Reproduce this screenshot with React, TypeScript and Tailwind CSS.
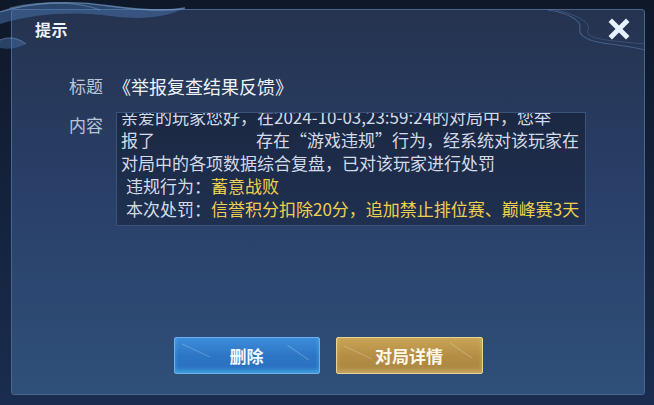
import { X } from 'lucide-react';

const cjk = { fontFamily: '"Noto Sans CJK SC", "Noto Sans", sans-serif' };

const Swirls = () => (
  <svg className="absolute left-0 top-0 pointer-events-none" width="654" height="70" viewBox="0 0 654 70" fill="none">
    <path d="M0 12 C30 2 70 0 110 6 C140 10 165 12 185 8 C165 18 140 20 110 16 C80 12 40 12 0 24 Z" fill="#4a76b0" fillOpacity="0.5" />
    <path d="M0 12 C30 2 70 0 110 6 C140 10 165 12 185 8" stroke="#86aee0" strokeOpacity="0.6" strokeWidth="1.3" />
    <path d="M10 8 C40 0 80 2 100 10" stroke="#8fb3df" strokeOpacity="0.4" strokeWidth="1" />
    <path d="M0 40 C10 36 18 38 26 44 C18 48 8 50 0 48 Z" fill="#4a76b0" fillOpacity="0.45" />
    <path d="M0 40 C10 36 18 38 26 44" stroke="#86aee0" strokeOpacity="0.5" strokeWidth="1" />
    <path d="M548 10 C565 12 582 20 580 28 C577 36 590 42 610 44 C625 46 638 48 645 50" stroke="#6f9bd0" strokeOpacity="0.4" strokeWidth="1.2" />
    <path d="M556 10 C574 14 592 22 588 30 C585 38 600 40 645 44" stroke="#6f9bd0" strokeOpacity="0.25" strokeWidth="1" />
  </svg>
);

export default function App() {
  return (
    <div className="w-[654px] h-[405px] overflow-hidden bg-gradient-to-b from-[#0e1829] to-[#1a2d50] pl-[11px] pr-[9px] pt-[9px] pb-[10px] relative" style={cjk}>
      <div className="relative h-full flex flex-col rounded-[3px] border border-[#4a6690] bg-gradient-to-b from-[#25334f] via-[#29406a] to-[#2f5079]">
        <div className="h-[44px] flex items-center pl-[23px] pb-[6px]">
          <span className="text-[16px] font-bold text-[#eef3fb] tracking-[0.5px]">提示</span>
        </div>
        <button className="absolute right-[11px] top-[5px] w-[28px] h-[28px] flex items-center justify-center text-[#e6f1ff]">
          <X className="w-[30px] h-[30px]" strokeWidth={4.2} strokeLinecap="square" />
        </button>

        <div className="flex items-center mt-[20px] pl-[57px] h-[24px]">
          <span className="text-[17px] text-[#b9c5d9]">标题</span>
          <span className="text-[18px] text-[#eef2f9] ml-[10px]">《举报复查结果反馈》</span>
        </div>

        <div className="flex mt-[14px] pl-[57px]">
          <span className="text-[17px] text-[#b9c5d9] leading-[24px] mt-[1px]">内容</span>
          <div className="ml-[13px] w-[470px] h-[114px] overflow-hidden border border-[#3b527a] bg-gradient-to-b from-[#1b2843] to-[#1f3050] pl-[4px]">
            <div className="-mt-[8px] text-[17px] leading-[23px] text-[#d3dbe9] whitespace-nowrap">
              <div>亲爱的玩家您好，在2024-10-03,23:59:24的对局中，您举</div>
              <div>
                报了<span className="inline-block w-[101px]" />存在“游戏违规”行为，经系统对该玩家在
              </div>
              <div>对局中的各项数据综合复盘，已对该玩家进行处罚</div>
              <div className="pl-[5px]">
                违规行为：<span className="text-[#efcf4f]">蓄意战败</span>
              </div>
              <div className="pl-[5px]">
                本次处罚：<span className="text-[#efcf4f]">信誉积分扣除20分，追加禁止排位赛、巅峰赛3天</span>
              </div>
            </div>
          </div>
        </div>

        <div className="mt-auto mb-[20px] flex justify-center gap-[16px]">
          <button className="relative w-[146px] h-[37px] rounded-[2px] border border-[#6cb0f0] bg-gradient-to-b from-[#3d8ddb] via-[#2d76c5] to-[#2a70c0] shadow-[inset_0_-3px_4px_rgba(90,220,255,0.45)] text-[17px] font-bold text-[#f3f8ff] overflow-hidden">
            <span className="absolute left-[6px] top-[12px] w-[30px] h-px bg-white/25 rotate-[25deg]" />
            <span className="absolute right-[8px] top-[14px] w-[26px] h-px bg-white/25 rotate-[35deg]" />
            <span className="relative">删除</span>
          </button>
          <button className="relative w-[147px] h-[37px] rounded-[2px] border border-[#e9d393] bg-gradient-to-b from-[#c9a556] via-[#b48e45] to-[#a98540] shadow-[inset_0_-3px_4px_rgba(255,230,160,0.35)] text-[17px] font-bold text-[#fff8e8] overflow-hidden">
            <span className="absolute left-[6px] top-[14px] w-[30px] h-px bg-white/25 rotate-[25deg]" />
            <span className="absolute right-[8px] top-[12px] w-[26px] h-px bg-white/25 rotate-[35deg]" />
            <span className="relative">对局详情</span>
          </button>
        </div>
      </div>
      <Swirls />
    </div>
  );
}
